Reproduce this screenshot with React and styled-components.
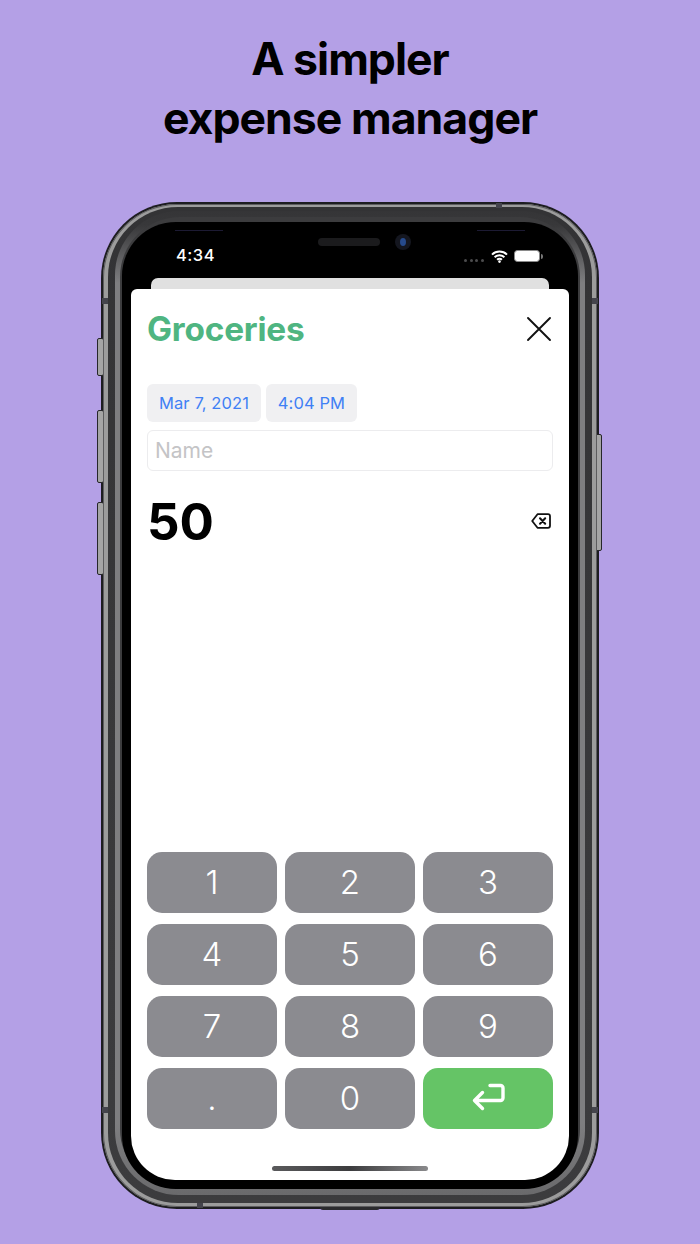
import React from "react";
import styled, { createGlobalStyle } from "styled-components";

const Global = createGlobalStyle`
  html, body { margin: 0; padding: 0; background: #b4a0e6; }
  * { box-sizing: border-box; }
`;

const Page = styled.div`
  width: 700px;
  height: 1244px;
  overflow: hidden;
  background: #b4a0e6;
  display: flex;
  flex-direction: column;
  align-items: center;
  padding-top: 30px;
`;

const Headline = styled.h1`
  margin: 0;
  height: 172px;
  font-family: Inter, "Liberation Sans", sans-serif;
  font-weight: 700;
  font-size: 44.6px;
  line-height: 59px;
  letter-spacing: -1px;
  color: #000;
  text-align: center;
`;

const Phone = styled.div`
  position: relative;
  z-index: 0;
  width: 498px;
  height: 1007px;
  flex: none;
  padding: 2px;
  border-radius: 76px;
  background: #1d1d20;
`;

const SideButton = styled.span`
  position: absolute;
  z-index: -1;
  top: ${(p) => p.$top}px;
  ${(p) => (p.$right ? "right: -3px;" : "left: -4px;")}
  width: 7px;
  height: ${(p) => p.$h}px;
  border: 1px solid #26262a;
  border-radius: 2px;
  background: #a5a5a5;
`;

const Notch = styled.span`
  position: absolute;
  z-index: 2;
  background: #44444c;
  ${(p) => p.$css}
`;

const BottomLip = styled.span`
  position: absolute;
  left: 219px;
  bottom: -1px;
  width: 60px;
  height: 3px;
  border-radius: 0 0 6px 6px;
  background: #2b2b2e;
`;

const Band = styled.div`
  height: 100%;
  padding: 3px 5px 4px;
  border-radius: 74px;
  background: #9c9c9c;
  box-shadow: inset 0 0 0 1px #5c5c5e;
`;

const BodyOuter = styled.div`
  height: 100%;
  padding: 4px 7px 8px;
  border-radius: 70px;
  background: linear-gradient(#333335, #3c3c3e);
`;

const BodyStripe = styled.div`
  height: 100%;
  padding: 6px 5px 6px;
  border-radius: 64px;
  background: linear-gradient(
    180deg,
    #353537 0,
    #38383a 14px,
    #7e7e80 72px,
    #7e7e80 calc(100% - 72px),
    #6a6a6c 100%
  );
`;

const BodyInner = styled.div`
  height: 100%;
  padding: 5px 2px 0;
  border-radius: 60px;
  background: #3c3c3e;
`;

const Screen = styled.div`
  height: 100%;
  background: #000;
  border-radius: 54px;
  padding: 0 9px 9px;
  display: flex;
  flex-direction: column;
  position: relative;
`;

const StatusBar = styled.div`
  height: 56px;
  flex: none;
  display: flex;
  align-items: flex-start;
  position: relative;
`;

const Time = styled.span`
  margin: 24px 0 0 45px;
  width: 142px;
  flex: none;
  font-family: Inter, "Liberation Sans", sans-serif;
  font-size: 16.5px;
  line-height: 18px;
  font-weight: 500;
  letter-spacing: 0.5px;
  color: #fff;
`;

const Speaker = styled.span`
  flex: none;
  margin-top: 16px;
  width: 62px;
  height: 8px;
  border-radius: 4px;
  background: #1b1b1d;
`;

const Camera = styled.span`
  flex: none;
  margin: 12px 0 0 15px;
  width: 16px;
  height: 16px;
  border-radius: 50%;
  background: #14161f;
  display: flex;
  align-items: center;
  justify-content: center;
  &::after {
    content: "";
    width: 6px;
    height: 8px;
    border-radius: 50%;
    background: #264a8c;
  }
`;

const StatusRight = styled.div`
  flex: none;
  margin: 27px 0 0 53px;
  display: flex;
  align-items: center;
  height: 14px;
`;

const Dots = styled.div`
  display: flex;
  gap: 2.5px;
  margin: 9px 7px 0 0;
  span {
    width: 3px;
    height: 3px;
    border-radius: 50%;
    background: #4c4c4e;
  }
`;

const Battery = styled.div`
  margin-left: 6px;
  width: 26px;
  height: 12px;
  border-radius: 3.5px;
  background: #fff;
  border: 1px solid #8a8a8a;
  position: relative;
  &::after {
    content: "";
    position: absolute;
    right: -4px;
    top: 2.5px;
    width: 2px;
    height: 5px;
    border-radius: 0 2px 2px 0;
    background: #777;
  }
`;

const Hairline = styled.span`
  position: absolute;
  top: 8px;
  left: ${(p) => p.$left}px;
  width: 48px;
  height: 1px;
  background: #1c1a33;
`;

const BackSheet = styled.div`
  flex: none;
  height: 11px;
  margin: 0 20px;
  border-radius: 7px 7px 0 0;
  background: #e0e0e0;
`;

const Sheet = styled.div`
  flex: 1;
  position: relative;
  display: flex;
  flex-direction: column;
  padding: 0 16px 51px;
  border-radius: 6px 6px 44px 44px;
  background: #fff;
  font-family: Inter, "Liberation Sans", sans-serif;
`;

const TitleRow = styled.div`
  height: 95px;
  display: flex;
  align-items: flex-start;
  justify-content: space-between;
`;

const Title = styled.h2`
  margin: 21px 0 0;
  font-size: 33.4px;
  line-height: 38px;
  font-weight: 700;
  letter-spacing: -0.2px;
  color: #4fb581;
`;

const CloseIcon = styled.svg`
  margin: 27px 1px 0 0;
  width: 26px;
  height: 26px;
`;

const Chips = styled.div`
  display: flex;
  gap: 5px;
`;

const Chip = styled.div`
  width: ${(p) => p.$w}px;
  height: 38px;
  display: flex;
  align-items: center;
  justify-content: center;
  border-radius: 6px;
  background: #f0f0f2;
  color: #3f80f5;
  font-size: 16.5px;
  letter-spacing: 0.1px;
`;

const NameField = styled.div`
  margin-top: 8px;
  height: 41px;
  display: flex;
  align-items: center;
  padding-left: 7px;
  border: 1px solid #ececee;
  border-radius: 6px;
  color: #c4c4c6;
  font-size: 21px;
`;

const AmountRow = styled.div`
  margin-top: 18px;
  height: 66px;
  display: flex;
  align-items: center;
  justify-content: space-between;
`;

const Amount = styled.div`
  font-size: 51px;
  font-weight: 700;
  line-height: 64px;
  letter-spacing: 0;
  color: #000;
`;

const BackIcon = styled.svg`
  width: 20px;
  height: 16px;
  margin: 0 2px 2px 0;
`;

const Pad = styled.div`
  margin-top: auto;
  display: grid;
  grid-template-columns: repeat(3, 130px);
  grid-auto-rows: 61px;
  column-gap: 8px;
  row-gap: 11px;
`;

const Key = styled.button`
  border: 0;
  padding: 0 0 2px;
  border-radius: 15px;
  background: ${(p) => (p.$green ? "#65c466" : "#8b8b90")};
  color: #fff;
  font-family: Inter, "Liberation Sans", sans-serif;
  font-size: 33px;
  font-weight: 300;
  display: flex;
  align-items: center;
  justify-content: center;
`;

const HomeBar = styled.span`
  position: absolute;
  left: 141px;
  bottom: 9px;
  width: 156px;
  height: 5px;
  border-radius: 3px;
  background: linear-gradient(90deg, #5a5a5c, #3c3c3e 50%, #8a8a8c);
`;

const keys = ["1", "2", "3", "4", "5", "6", "7", "8", "9", ".", "0"];

export default function App() {
  return (
    <Page>
      <Global />
      <Headline>
        A simpler
        <br />
        expense manager
      </Headline>
      <Phone>
        <SideButton $top={136} $h={38} />
        <SideButton $top={208} $h={73} />
        <SideButton $top={300} $h={73} />
        <SideButton $right $top={232} $h={117} />
        <Notch $css="left: 1px; top: 96px; width: 6px; height: 6px;" />
        <Notch $css="right: 1px; top: 96px; width: 6px; height: 6px;" />
        <Notch $css="left: 1px; top: 905px; width: 6px; height: 6px;" />
        <Notch $css="right: 1px; top: 905px; width: 6px; height: 6px;" />
        <Notch $css="left: 395px; top: 1px; width: 6px; height: 5px;" />
        <Notch $css="left: 96px; bottom: 1px; width: 6px; height: 5px;" />
        <BottomLip />
        <Band>
          <BodyOuter>
            <BodyStripe>
              <BodyInner>
                <Screen>
                  <StatusBar>
                    <Hairline $left={44} />
                    <Hairline $left={346} />
                    <Time>4:34</Time>
                    <Speaker />
                    <Camera />
                    <StatusRight>
                      <Dots>
                        <span />
                        <span />
                        <span />
                        <span />
                      </Dots>
                      <svg width="17" height="13" viewBox="0 0 17 13">
                        <path
                          d="M1 4.6C5.2.6 11.8.6 16 4.6M3.6 7.2c2.7-2.5 7.1-2.5 9.8 0M6.1 9.7c1.3-1.2 3.5-1.2 4.8 0"
                          fill="none"
                          stroke="#fff"
                          strokeWidth="2"
                        />
                        <circle cx="8.5" cy="11.6" r="1.3" fill="#fff" />
                      </svg>
                      <Battery />
                    </StatusRight>
                  </StatusBar>
                  <BackSheet />
                  <Sheet>
                    <TitleRow>
                      <Title>Groceries</Title>
                      <CloseIcon viewBox="0 0 26 26">
                        <path
                          d="M2 2L24 24M24 2L2 24"
                          stroke="#111"
                          strokeWidth="1.9"
                          strokeLinecap="round"
                        />
                      </CloseIcon>
                    </TitleRow>
                    <Chips>
                      <Chip $w={114}>Mar 7, 2021</Chip>
                      <Chip $w={91}>4:04 PM</Chip>
                    </Chips>
                    <NameField>Name</NameField>
                    <AmountRow>
                      <Amount>50</Amount>
                      <BackIcon viewBox="0 0 20 16">
                        <path
                          d="M6.5 1.2H17a2 2 0 0 1 2 2V12.8a2 2 0 0 1-2 2H6.5L1.2 8Z"
                          fill="none"
                          stroke="#111"
                          strokeWidth="1.8"
                          strokeLinejoin="round"
                        />
                        <path
                          d="M9 5.2L14.2 10.8M14.2 5.2L9 10.8"
                          stroke="#111"
                          strokeWidth="2"
                          strokeLinecap="round"
                        />
                      </BackIcon>
                    </AmountRow>
                    <Pad>
                      {keys.map((k) => (
                        <Key key={k}>{k}</Key>
                      ))}
                      <Key $green aria-label="Return">
                        <svg width="34" height="30" viewBox="0 0 34 30">
                          <path
                            d="M19 2.5H29.5a2.5 2.5 0 0 1 2.5 2.5V15a2.5 2.5 0 0 1-2.5 2.5H4M11.5 9.5L3.5 17.5L11.5 25.5"
                            fill="none"
                            stroke="#fff"
                            strokeWidth="3.4"
                            strokeLinecap="round"
                            strokeLinejoin="round"
                          />
                        </svg>
                      </Key>
                    </Pad>
                    <HomeBar />
                  </Sheet>
                </Screen>
              </BodyInner>
            </BodyStripe>
          </BodyOuter>
        </Band>
      </Phone>
    </Page>
  );
}
